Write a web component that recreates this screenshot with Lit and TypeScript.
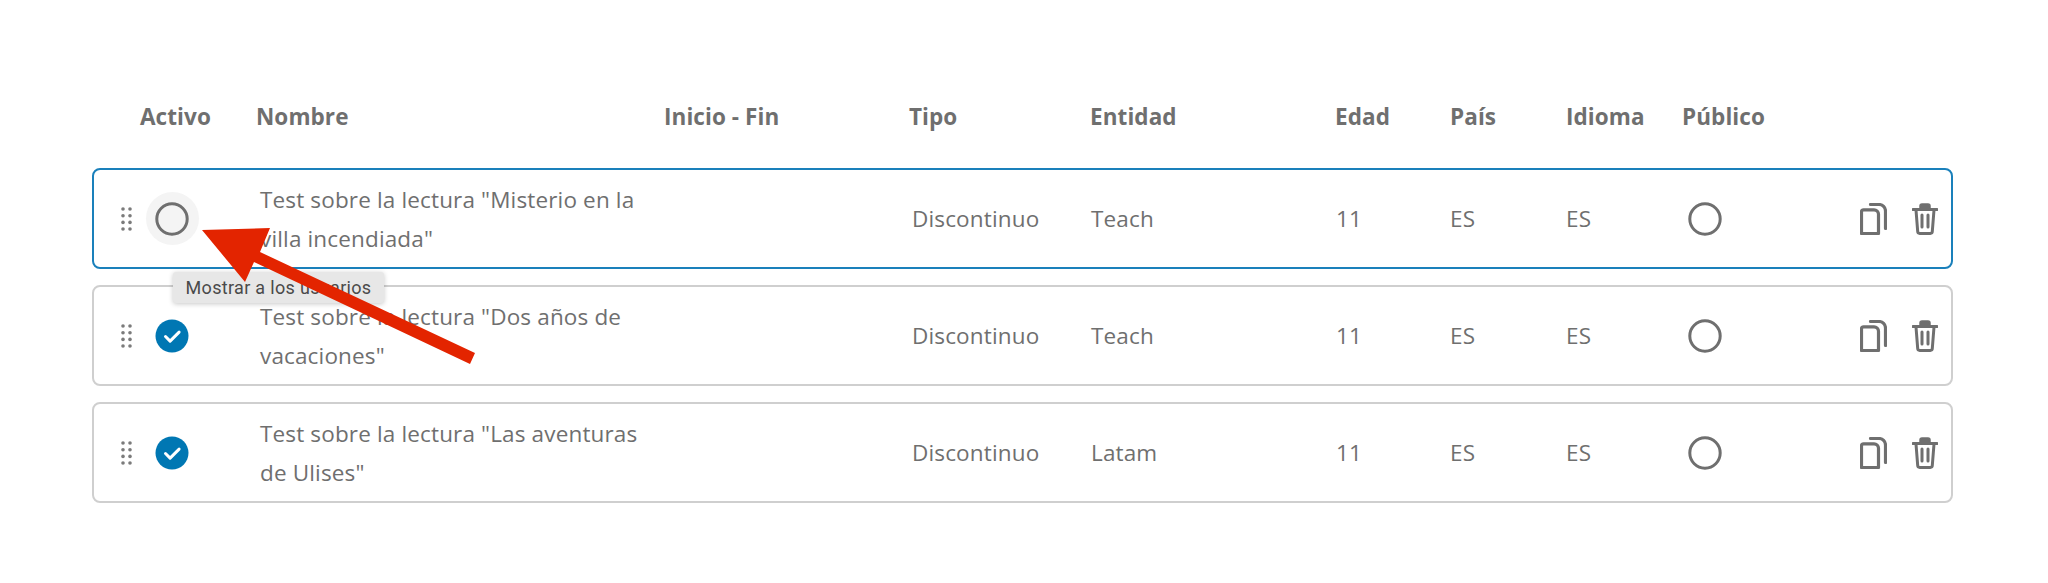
import { LitElement, html, css, svg } from "lit";
import { customElement } from "lit/decorators.js";

interface Row { lines: string[]; on: boolean; entity: string; tip?: boolean; focus?: boolean; }

const ROWS: Row[] = [
  { lines: ['Test sobre la lectura "Misterio en la', 'villa incendiada"'], on: false, entity: "Teach", tip: true, focus: true },
  { lines: ['Test sobre la lectura "Dos años de', 'vacaciones"'], on: true, entity: "Teach" },
  { lines: ['Test sobre la lectura "Las aventuras', 'de Ulises"'], on: true, entity: "Latam" },
];

const HEAD = ["Activo", "Nombre", "Inicio - Fin", "Tipo", "Entidad", "Edad", "País", "Idioma", "Público"];

const ring = svg`<svg class="ring" width="34" height="34" viewBox="0 0 34 34"><circle cx="17" cy="17" r="15.2" fill="none" stroke="#6f6f6f" stroke-width="3"/></svg>`;
const check = svg`<svg class="ring" width="34" height="34" viewBox="0 0 34 34"><circle cx="17" cy="17" r="16.5" fill="#0077b3"/><path d="M10.5 17.5l4.6 4.6 9-9" fill="none" stroke="#fff" stroke-width="3" stroke-linecap="round" stroke-linejoin="round"/></svg>`;
const dots = svg`<svg width="12" height="24" viewBox="0 0 12 24" fill="#7b7b7b">${[2, 8.7, 15.4, 22].map(y => svg`<circle cx="2" cy="${y}" r="1.8"/><circle cx="9" cy="${y}" r="1.8"/>`)}</svg>`;
const copy = svg`<svg width="27" height="32" viewBox="0 0 27 32" fill="none" stroke="#6f6f6f" stroke-width="3.2" stroke-linejoin="round"><path d="M3.5 6.8h10.5a4.500 4.500 0 0 1 4.500 4.500V30.500H1.500V8.800a2 2 0 0 1 2-2z"/><path d="M10.500 1.500H19a6.500 6.500 0 0 1 6.500 6.500V25.500" stroke-linecap="round"/></svg>`;
const trash = svg`<svg width="26" height="32" viewBox="0 0 26 32" fill="none" stroke="#6f6f6f"><path d="M1 6.500H25" stroke-width="3" stroke-linecap="round"/><path d="M8 5.500V3a2 2 0 0 1 2-2h6a2 2 0 0 1 2 2v2.500z" fill="#6f6f6f" stroke-width="1.500"/><path d="M4 7l1.700 21.500a2 2 0 0 0 2 1.900h10.600a2 2 0 0 0 2-1.900L22 7" stroke-width="3"/><path d="M10 12v12M16 12v12" stroke-width="3" stroke-linecap="round"/></svg>`;

@customElement("app-root")
export class AppRoot extends LitElement {
  static styles = css`
    :host { display: block; position: relative; width: 2048px; height: 583px; background: #fff; overflow: hidden; font-family: "Open Sans", sans-serif; color: #6f6f6f; }
    .table { display: flex; flex-direction: column; gap: 16px; padding: 97px 95px 0 92px; }
    .grid { display: grid; grid-template-columns: 48px 116px 408px 245px 181px 245px 115px 116px 116px 130px 1fr; align-items: center; }
    .head { height: 38px; margin-bottom: 17px; font-weight: 700; font-size: 22.500px; letter-spacing: .08px; white-space: nowrap; }
    .head span:first-child { grid-column: 2; }
    .row { position: relative; height: 101px; box-sizing: border-box; border: 2px solid #cfcfcf; border-radius: 8px; font-size: 22.500px; letter-spacing: .15px; }
    .row.focus { border-color: #1a80bb; }
    .cells { margin: -2px; height: 101px; }
    .ctl { grid-column: 1 / 3; display: flex; align-items: center; padding-left: 29px; gap: 22px; }
    .hover { position: relative; width: 34px; height: 34px; display: flex; }
    .hover.on::before { content: ""; position: absolute; inset: -9.500px; border-radius: 50%; background: #f4f4f4; }
    .ring { position: relative; display: block; }
    .name { line-height: 39px; padding-left: 4px; white-space: nowrap; }
    .tipo { padding-left: 3px; }
    .ent { padding-left: 1px; }
    .age { padding-left: 1px; }
    .pub { padding-left: 6px; display: flex; }
    .actions { display: flex; align-items: center; justify-content: flex-end; gap: 25px; padding-right: 15px; }
    .tip { position: absolute; left: 79px; top: 102px; z-index: 2; width: 211px; height: 31px; box-sizing: border-box; background: #e7e7e7; border-radius: 3px; box-shadow: 0 1px 5px rgba(0,0,0,.22); font: 18px Roboto, sans-serif; letter-spacing: .32px; color: #4a4a4a; display: flex; align-items: center; justify-content: center; white-space: nowrap; }
    .arrow { position: absolute; left: 0; top: 0; z-index: 3; pointer-events: none; }
  `;

  render() {
    return html`
      <div class="table">
        <div class="grid head">
          ${HEAD.map(h => html`<span>${h}</span>`)}
        </div>
        ${ROWS.map(r => html`
          <div class="row ${r.focus ? "focus" : ""}">
            <div class="grid cells">
              <div class="ctl">
                ${dots}
                <div class="hover ${r.tip ? "on" : ""}">${r.on ? check : ring}</div>
              </div>
              <div class="name">${r.lines[0]}<br />${r.lines[1]}</div>
              <div></div>
              <div class="tipo">Discontinuo</div>
              <div class="ent">${r.entity}</div>
              <div class="age">11</div>
              <div>ES</div>
              <div>ES</div>
              <div class="pub">${ring}</div>
              <div class="actions">${copy}${trash}</div>
            </div>
            ${r.tip ? html`<div class="tip">Mostrar a los usuarios</div>` : ""}
          </div>
        `)}
      </div>
      <svg class="arrow" width="2048" height="583" viewBox="0 0 2048 583">
        <polygon points="202,230 270,228 260,252 475,353 470,364 254,262 245,282" fill="#e32400"/>
      </svg>
    `;
  }
}
